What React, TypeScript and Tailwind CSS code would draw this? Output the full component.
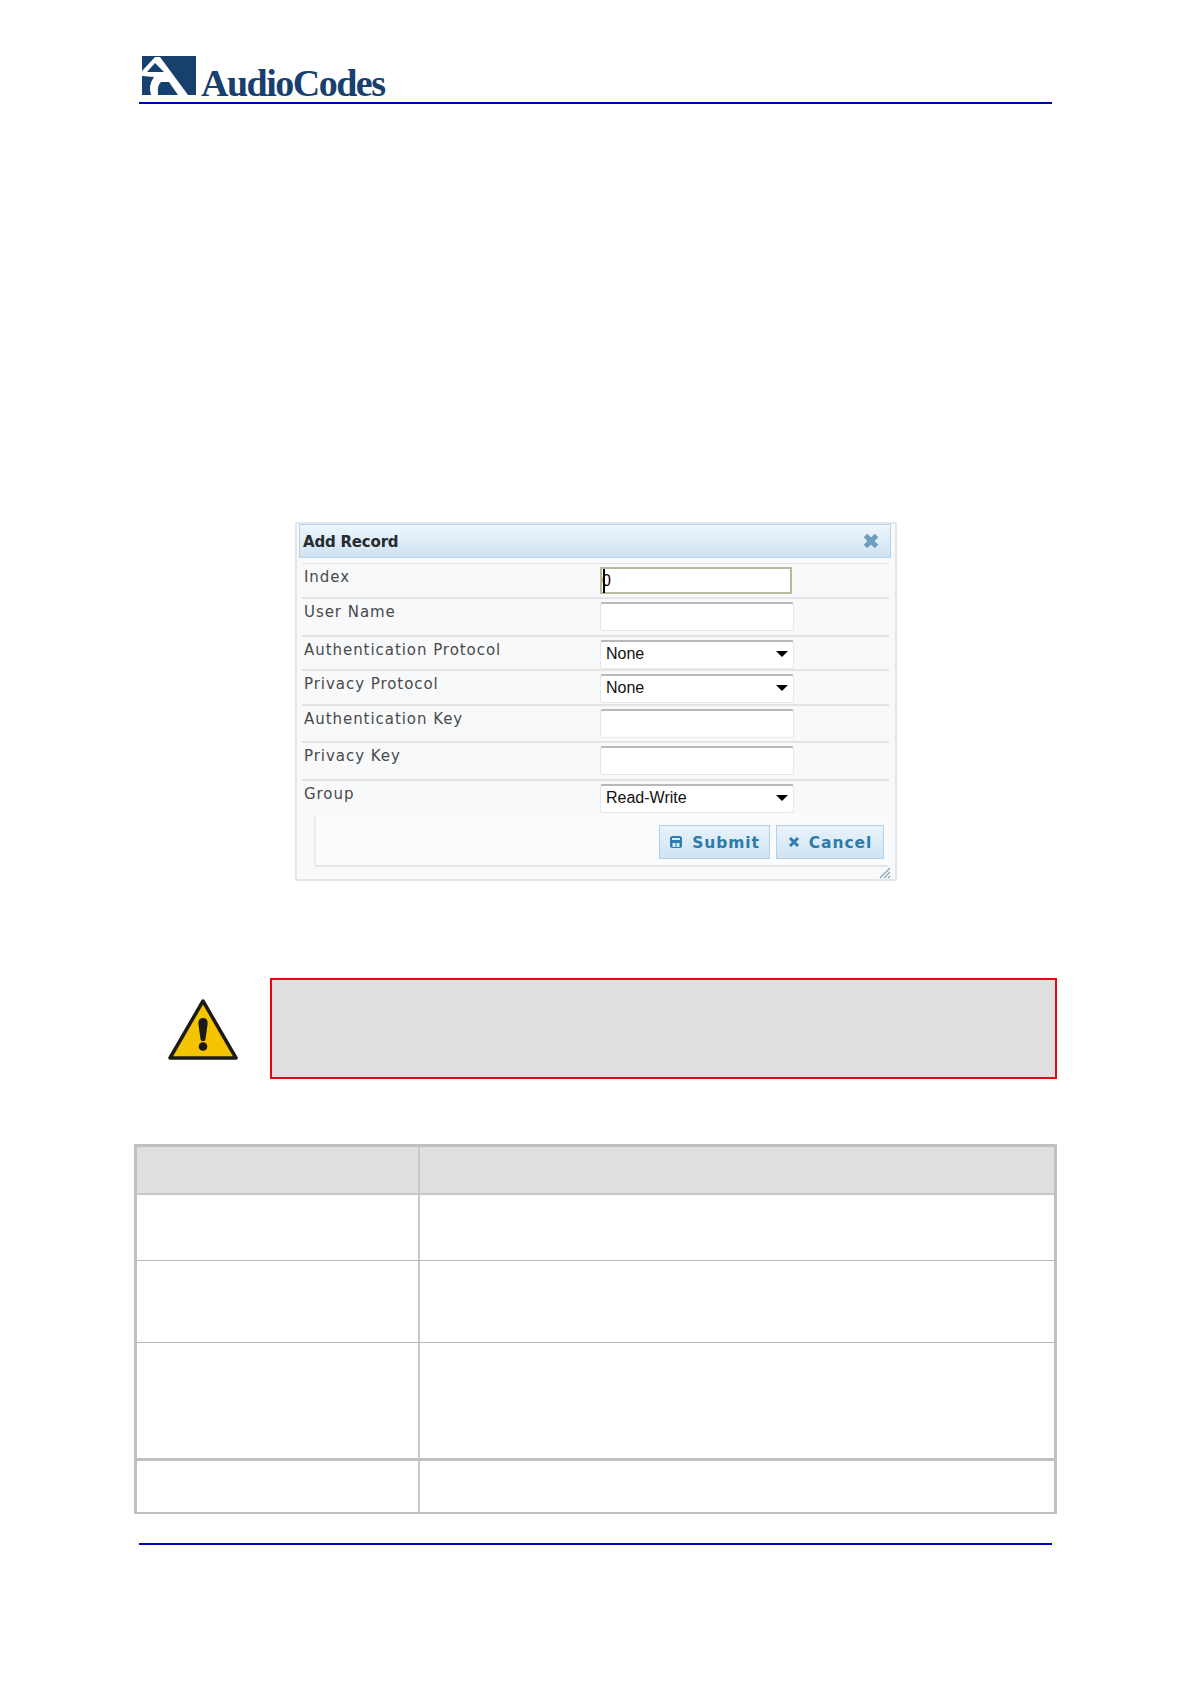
import { ReactNode } from 'react';

const labelFont = "font-['DejaVu_Sans',sans-serif]";

function LogoMark() {
  return (
    <svg width="54" height="39" viewBox="0 0 54 39" className="shrink-0">
      <rect x="0" y="0" width="54" height="39" fill="#17406f" />
      {/* peak, band to the lower right and the round cut at the bottom */}
      <path d="M0 15 L13 1 L18 1 L46 39 L36 39 L27 26 L19 26 Q15 29 16 39 L9 39 Q6 29 12 21 L0 20 Z" fill="#fff" />
      <path d="M5 16 L13 7 L22 16 Z" fill="#17406f" />
    </svg>
  );
}

function Warning() {
  return (
    <svg width="70" height="62" viewBox="0 0 70 62">
      <path d="M35 3 L68 60 L2 60 Z" fill="#f5c400" stroke="#1c1a14" strokeWidth="3.500" strokeLinejoin="round" />
      <path d="M35 20 C31 20 30 23 30.500 27 L32.500 41 C33 44 37 44 37.500 41 L39.500 27 C40 23 39 20 35 20 Z" fill="#1c1a14" />
      <circle cx="35" cy="48.500" r="4.300" fill="#1c1a14" />
    </svg>
  );
}

function Caret() {
  return <div className="h-0 w-0 border-x-[6px] border-t-[6px] border-x-transparent border-t-black" />;
}

function Field({ children, focus }: { children?: ReactNode; focus?: boolean }) {
  return (
    <div
      className={
        focus
          ? "flex h-[27px] w-[192px] items-center border-2 border-[#b4bc9c] bg-white pl-[1px]"
          : "flex h-[29px] w-[194px] items-center justify-between rounded-[3px] border border-[#e6e8ea] border-t-2 border-t-[#b9b9b9] bg-white pb-[2px] pl-[5px] pr-[5px]"
      }
    >
      {children}
    </div>
  );
}

function Row({ label, height, children, noLine }: { label: string; height: number; children: ReactNode; noLine?: boolean }) {
  return (
    <div
      className={`flex items-start pl-[2px] ${noLine ? '' : 'border-b-2 border-[#e2e4e6]'}`}
      style={{ height }}
    >
      <div className={`w-[296px] pt-[3px] text-[15px] leading-[20px] tracking-[0.95px] text-[#4a4a4a] ${labelFont}`}>{label}</div>
      <div className="pt-[3px]">{children}</div>
    </div>
  );
}

function SelectValue({ text }: { text: string }) {
  return (
    <>
      <span className="font-['Liberation_Sans',sans-serif] text-[16px] text-[#111]">{text}</span>
      <Caret />
    </>
  );
}

function Btn({ label, width, icon }: { label: string; width: number; icon: 'save' | 'x' }) {
  return (
    <div
      className="flex h-[34px] items-center justify-center gap-[9px] border border-[#b4d0e6] bg-gradient-to-b from-[#e9f3fb] to-[#cfe4f4]"
      style={{ width }}
    >
      {icon === 'save' ? (
        <svg width="14" height="14" viewBox="0 0 14 14">
          <rect x="1" y="1" width="12" height="12" rx="2.500" fill="#2f7cb0" />
          <rect x="3" y="3" width="8" height="2" fill="#d8e9f6" />
          <rect x="3.500" y="8" width="3" height="4" fill="#d8e9f6" />
          <rect x="7.500" y="8" width="3" height="4" fill="#d8e9f6" />
        </svg>
      ) : (
        <svg width="12" height="12" viewBox="0 0 12 12">
          <path d="M2 2 L10 10 M10 2 L2 10" stroke="#2f7cb0" strokeWidth="3" />
        </svg>
      )}
      <span className={`pt-[3px] text-[15.500px] font-bold tracking-[0.9px] text-[#2f7aa8] ${labelFont}`}>{label}</span>
    </div>
  );
}

function Dialog() {
  return (
    <div className="ml-[295px] flex h-[359px] w-[602px] flex-col border-2 border-[#e3e5e7] bg-[#f7f9fb] pl-[2px] pr-[4px]">
      <div className="flex h-[34px] shrink-0 items-center justify-between border border-[#b5d3ea] bg-gradient-to-b from-[#eef6fc] to-[#cfe2f1] pl-[3px] pr-[10px]">
        <span className={`pt-[2px] text-[15px] font-bold tracking-[-0.2px] text-[#262c30] ${labelFont}`}>Add Record</span>
        <svg width="18" height="18" viewBox="0 0 18 18">
          <path d="M3.500 3.500 L14.500 14.500 M14.500 3.500 L3.500 14.500" stroke="#6f9dbd" strokeWidth="5" />
        </svg>
      </div>
      <div className="mt-[5px] flex flex-col px-[3px] pr-[2px]">
        <div className="h-[1px] bg-[#e2e4e6]" />
        <Row label="Index" height={35}>
          <Field focus>
            <div className="h-[24px] w-[2px] bg-black" />
            <span className="ml-[-3px] font-['Liberation_Sans',sans-serif] text-[16px] leading-none text-black">0</span>
          </Field>
        </Row>
        <Row label="User Name" height={38}>
          <Field />
        </Row>
        <Row label="Authentication Protocol" height={34}>
          <Field>
            <SelectValue text="None" />
          </Field>
        </Row>
        <Row label="Privacy Protocol" height={35}>
          <Field>
            <SelectValue text="None" />
          </Field>
        </Row>
        <Row label="Authentication Key" height={37}>
          <Field />
        </Row>
        <Row label="Privacy Key" height={38}>
          <Field />
        </Row>
        <Row label="Group" height={33} noLine>
          <Field>
            <SelectValue text="Read-Write" />
          </Field>
        </Row>
      </div>
      <div className="ml-[15px] mr-[3px] flex h-[57px] items-center justify-end gap-[6px] border-b-2 border-l-2 border-[#e4e6e8] border-l-[#eceef0] bg-[#fafbfc] pr-[4px] pt-[5px]">
        <Btn label="Submit" width={111} icon="save" />
        <Btn label="Cancel" width={108} icon="x" />
      </div>
      <div className="flex flex-1 items-end justify-end">
        <svg width="12" height="12" viewBox="0 0 12 12">
          <path d="M1 11 L11 1 M5 11 L11 5 M9 11 L11 9" stroke="#8ea5b8" strokeWidth="1.200" />
        </svg>
      </div>
    </div>
  );
}

function TableRow({ height, thick, last }: { height: number; thick?: boolean; last?: boolean }) {
  return (
    <div
      className={`grid grid-cols-[283px_1fr] ${last ? '' : thick ? 'border-b-[3px] border-[#c0c0c0]' : 'border-b border-[#b8b8b8]'}`}
      style={{ height }}
    >
      <div className="border-r-2 border-[#c8c8c8]" />
      <div />
    </div>
  );
}

export default function App() {
  return (
    <div className="relative flex h-[1683px] w-[1191px] flex-col overflow-hidden bg-white">
      <header className="ml-[139px] mt-[56px] w-[913px] border-b-2 border-[#0000b4] pb-[7px]">
        <div className="flex h-[39px] items-start pl-[3px]">
          <LogoMark />
          <span className="ml-[5px] mt-[8px] font-['Liberation_Serif',serif] text-[38px] font-bold leading-[39px] tracking-[-1.500px] text-[#17406f]">
            AudioCodes
          </span>
        </div>
      </header>

      <div className="mt-[418px]">
        <Dialog />
      </div>

      <div className="ml-[168px] mt-[97px] flex items-center gap-[32px]">
        <Warning />
        <div className="h-[101px] w-[787px] border-2 border-[#e30613] bg-[#dfdfdf]" />
      </div>

      <div className="ml-[134px] mt-[65px] h-[370px] w-[923px] border-x-[3px] border-t-[3px] border-b-2 border-[#c0c0c0]">
        <div className="grid h-[48px] grid-cols-[283px_1fr] border-b-2 border-[#c8c8c8] bg-[#dfdfdf]">
          <div className="border-r-2 border-[#c8c8c8]" />
          <div />
        </div>
        <TableRow height={66} />
        <TableRow height={82} />
        <TableRow height={118} thick />
        <TableRow height={51} last />
      </div>

      <div className="ml-[139px] mt-[29px] h-[2px] w-[913px] bg-[#0000b4]" />
    </div>
  );
}
